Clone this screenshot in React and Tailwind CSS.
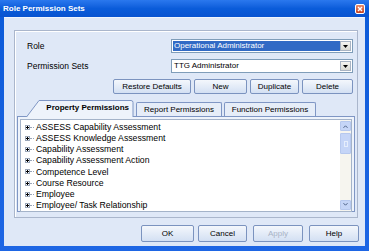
import React from "react";

const font = { fontFamily: '"Liberation Sans", Arial, sans-serif' };

function XPButton({ children, className = "", disabled = false }) {
  return (
    <div
      className={`flex items-center justify-center h-[15px] rounded-[2px] border border-[#7b93bf] bg-gradient-to-b from-[#f4f7fc] to-[#d3e0f3] text-[8px] ${disabled ? "text-[#a8b3c6]" : "text-black"} ${className}`}
    >
      {children}
    </div>
  );
}

function Select({ value, selected }) {
  return (
    <div className="flex h-[14px] w-[182px] items-stretch border border-[#7f9db9] bg-white p-[1px]">
      <div
        className={`flex flex-1 items-center px-[1px] text-[8px] ${selected ? "bg-[#316ac5] text-white" : "text-black"}`}
      >
        {value}
      </div>
      <div className="flex w-[11px] items-center justify-center border border-[#a9b4c4] bg-gradient-to-b from-[#f5f5f2] to-[#d9d9d2]">
        <svg width="5" height="3" viewBox="0 0 5 3">
          <path d="M0 0h5L2.5 3z" fill="#000" />
        </svg>
      </div>
    </div>
  );
}

function Plus() {
  return (
    <div className="flex items-center">
      <div className="relative flex h-[5px] w-[5px] items-center justify-center border border-[#9aa6b8] bg-white">
        <svg width="3" height="3" viewBox="0 0 3 3">
          <path d="M0 1.5h3M1.5 0v3" stroke="#000" strokeWidth="1" />
        </svg>
      </div>
      <div className="h-0 w-[4px] border-t border-dotted border-[#9aa6b8]" />
    </div>
  );
}

const items = [
  "ASSESS Capability Assessment",
  "ASSESS Knowledge Assessment",
  "Capability Assessment",
  "Capability Assessment Action",
  "Competence Level",
  "Course Resource",
  "Employee",
  "Employee/ Task Relationship",
];

export default function App() {
  return (
    <div
      style={font}
      className="flex h-[251px] w-[369px] flex-col bg-gradient-to-b from-[#0a5ad8] to-[#1e66e4] text-black"
    >
      {/* Title bar */}
      <div className="flex h-[17px] items-center justify-between bg-gradient-to-b from-[#2a78ee] via-[#0a5cda] to-[#0853d0] pl-[3px] pr-[4px]">
        <span className="text-[8px] font-bold text-white">Role Permission Sets</span>
        <div className="flex h-[10px] w-[10px] items-center justify-center rounded-[2px] border border-white bg-gradient-to-b from-[#e88a6a] to-[#c5401c]">
          <svg width="6" height="6" viewBox="0 0 6 6">
            <path d="M1 1l4 4M5 1l-4 4" stroke="#fff" strokeWidth="1.4" />
          </svg>
        </div>
      </div>

      {/* Client area */}
      <div className="mx-[4px] mb-[5px] flex flex-1 flex-col border-t border-[#f0f5fd] bg-[#dfe8f7] pt-[12px]">
        {/* Group box */}
        <div className="ml-[10px] mr-[7px] flex h-[188px] flex-col border border-[#aab6cc] shadow-[inset_1px_1px_0_#fff] px-[2px]">
          <div className="mt-[8px] flex items-center justify-between pl-[10px] pr-[2px]">
            <span className="text-[8.5px]">Role</span>
            <Select value="Operational Administrator" selected />
          </div>
          <div className="mt-[6px] flex items-center justify-between pl-[10px] pr-[2px]">
            <span className="text-[8.5px]">Permission Sets</span>
            <Select value="TTG Administrator" />
          </div>
          <div className="mt-[6px] flex justify-end gap-[3px] pr-[2px]">
            <XPButton className="w-[78px]">Restore Defaults</XPButton>
            <XPButton className="w-[53px]">New</XPButton>
            <XPButton className="w-[49px]">Duplicate</XPButton>
            <XPButton className="w-[51px]">Delete</XPButton>
          </div>

          {/* Tabs */}
          <div className="mt-[6px] flex items-end pl-[9px]">
            <div className="relative flex h-[16px] w-[108px] items-center justify-end pr-[5px]">
              <svg className="absolute inset-0" width="108" height="17" viewBox="0 0 108 17">
                <path d="M0.5 17L13 0.5H105a2 2 0 0 1 2 2V17" fill="#eef3fb" stroke="#7f96c4" />
              </svg>
              <span className="relative text-[8px] font-bold">Property Permissions</span>
            </div>
            <div className="ml-[2px] flex h-[14px] w-[86px] items-center justify-center rounded-t-[2px] border border-b-0 border-[#7f96c4] bg-[#e6edf8] text-[8px]">
              Report Permissions
            </div>
            <div className="ml-[2px] flex h-[14px] w-[92px] items-center justify-center rounded-t-[2px] border border-b-0 border-[#7f96c4] bg-[#e6edf8] text-[8px]">
              Function Permissions
            </div>
          </div>

          {/* Tab panel */}
          <div className="flex h-[96px] flex-col border border-[#7f96c4] bg-[#eef3fb] p-[2px]">
            <div className="flex flex-1 border border-[#a4b3c9] bg-white">
              <div className="flex flex-1 flex-col pl-[4px] pt-[2px]">
                {items.map((t) => (
                  <div key={t} className="flex h-[11.1px] items-center gap-[2px]">
                    <Plus />
                    <span className="text-[8.7px] leading-none">{t}</span>
                  </div>
                ))}
              </div>
              <div className="flex w-[11px] flex-col bg-[#f6f5ef] py-[1px]">
                <div className="flex h-[10px] items-center justify-center rounded-[1px] border border-[#b6c8ee] bg-[#c5d5f7]">
                  <svg width="5" height="3" viewBox="0 0 5 3">
                    <path d="M0.5 2.8L2.5 0.8L4.5 2.8" stroke="#4d6185" fill="none" strokeWidth="1" />
                  </svg>
                </div>
                <div className="mt-[2px] flex h-[21px] items-center justify-center rounded-[1px] border border-[#b6c8ee] bg-[#c5d5f7]">
                  <div className="h-[6px] w-[4px] border border-[#e6eefc]" />
                </div>
                <div className="flex-1" />
                <div className="flex h-[10px] items-center justify-center rounded-[1px] border border-[#b6c8ee] bg-[#c5d5f7]">
                  <svg width="5" height="3" viewBox="0 0 5 3">
                    <path d="M0.5 0.2L2.5 2.2L4.5 0.2" stroke="#4d6185" fill="none" strokeWidth="1" />
                  </svg>
                </div>
              </div>
            </div>
          </div>
        </div>

        {/* Bottom buttons */}
        <div className="mt-[7px] flex justify-end pr-[6px]">
          <XPButton className="h-[17px] w-[53px]">OK</XPButton>
          <XPButton className="ml-[4px] h-[17px] w-[49px]">Cancel</XPButton>
          <XPButton className="ml-[6px] h-[17px] w-[50px]" disabled>Apply</XPButton>
          <XPButton className="ml-[6px] h-[17px] w-[50px]">Help</XPButton>
        </div>
      </div>
    </div>
  );
}
